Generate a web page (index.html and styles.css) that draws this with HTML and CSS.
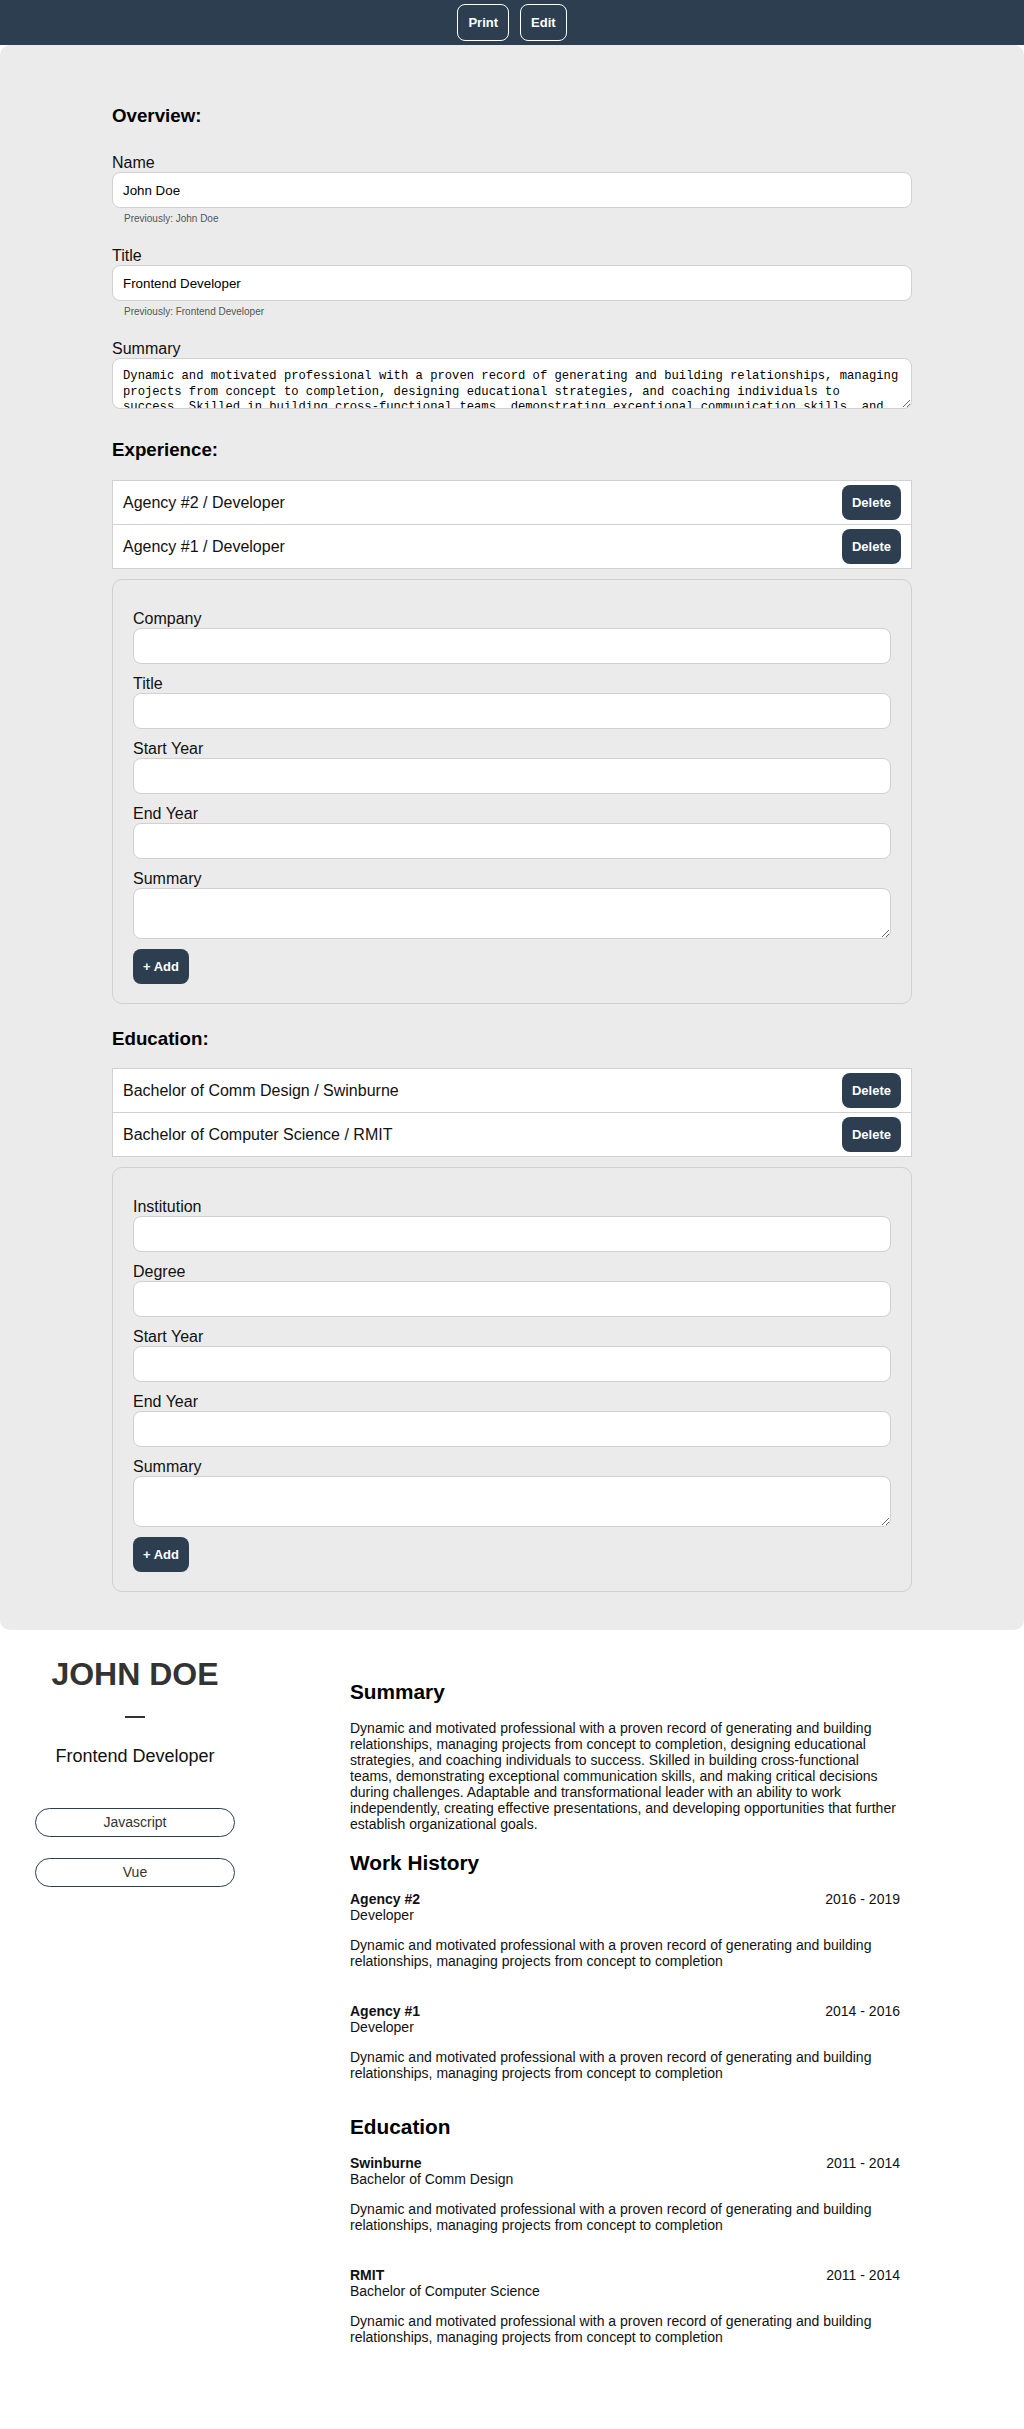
FILE: index.html
```html
<!DOCTYPE html>
<html lang="en">
<head>
<meta charset="utf-8">
<title>Resume Builder</title>
<link rel="stylesheet" href="styles.css">
</head>
<body>
<header class="topbar">
  <button class="btn-outline" type="button">Print</button>
  <button class="btn-outline" type="button">Edit</button>
</header>

<main class="editor">
  <div class="editor-inner">
    <section class="overview">
      <h3 class="section-title">Overview:</h3>
      <div class="field field-ov">
        <label class="field-label">Name</label>
        <input class="text-input" type="text" value="John Doe">
        <div class="previous">Previously: John Doe</div>
      </div>
      <div class="field field-ov">
        <label class="field-label">Title</label>
        <input class="text-input" type="text" value="Frontend Developer">
        <div class="previous">Previously: Frontend Developer</div>
      </div>
      <div class="field field-last">
        <label class="field-label">Summary</label>
        <textarea class="text-area">Dynamic and motivated professional with a proven record of generating and building relationships, managing projects from concept to completion, designing educational strategies, and coaching individuals to success. Skilled in building cross-functional teams, demonstrating exceptional communication skills, and making critical decisions during challenges. Adaptable and transformational leader with an ability to work independently, creating effective presentations, and developing opportunities that further establish organizational goals.</textarea>
      </div>
    </section>

    <section class="experience">
      <h3 class="section-title section-title-exp">Experience:</h3>
      <ul class="entry-list">
        <li class="entry"><span>Agency #2 / Developer</span><button class="btn-dark" type="button">Delete</button></li>
        <li class="entry"><span>Agency #1 / Developer</span><button class="btn-dark" type="button">Delete</button></li>
      </ul>
      <div class="form-box">
        <div class="field"><label class="field-label">Company</label><input class="text-input" type="text"></div>
        <div class="field"><label class="field-label">Title</label><input class="text-input" type="text"></div>
        <div class="field"><label class="field-label">Start Year</label><input class="text-input" type="text"></div>
        <div class="field"><label class="field-label">End Year</label><input class="text-input" type="text"></div>
        <div class="field"><label class="field-label">Summary</label><textarea class="text-area"></textarea></div>
        <button class="btn-dark btn-add" type="button">+ Add</button>
      </div>
    </section>

    <section class="education">
      <h3 class="section-title section-title-edu">Education:</h3>
      <ul class="entry-list">
        <li class="entry"><span>Bachelor of Comm Design / Swinburne</span><button class="btn-dark" type="button">Delete</button></li>
        <li class="entry"><span>Bachelor of Computer Science / RMIT</span><button class="btn-dark" type="button">Delete</button></li>
      </ul>
      <div class="form-box">
        <div class="field"><label class="field-label">Institution</label><input class="text-input" type="text"></div>
        <div class="field"><label class="field-label">Degree</label><input class="text-input" type="text"></div>
        <div class="field"><label class="field-label">Start Year</label><input class="text-input" type="text"></div>
        <div class="field"><label class="field-label">End Year</label><input class="text-input" type="text"></div>
        <div class="field"><label class="field-label">Summary</label><textarea class="text-area"></textarea></div>
        <button class="btn-dark btn-add" type="button">+ Add</button>
      </div>
    </section>
  </div>
</main>

<div class="resume">
  <aside class="resume-side">
    <h1 class="resume-name">JOHN DOE</h1>
    <div class="dash"></div>
    <p class="resume-title">Frontend Developer</p>
    <ul class="skills">
      <li class="skill">Javascript</li>
      <li class="skill">Vue</li>
    </ul>
  </aside>
  <div class="resume-main">
    <h2 class="resume-heading resume-heading-first">Summary</h2>
    <p class="resume-text">Dynamic and motivated professional with a proven record of generating and building relationships, managing projects from concept to completion, designing educational strategies, and coaching individuals to success. Skilled in building cross-functional teams, demonstrating exceptional communication skills, and making critical decisions during challenges. Adaptable and transformational leader with an ability to work independently, creating effective presentations, and developing opportunities that further establish organizational goals.</p>

    <h2 class="resume-heading">Work History</h2>
    <div class="job">
      <div class="job-head"><span class="job-name">Agency #2</span><span>2016 - 2019</span></div>
      <div class="job-role">Developer</div>
      <p class="job-desc">Dynamic and motivated professional with a proven record of generating and building relationships, managing projects from concept to completion</p>
    </div>
    <div class="job">
      <div class="job-head"><span class="job-name">Agency #1</span><span>2014 - 2016</span></div>
      <div class="job-role">Developer</div>
      <p class="job-desc">Dynamic and motivated professional with a proven record of generating and building relationships, managing projects from concept to completion</p>
    </div>

    <h2 class="resume-heading">Education</h2>
    <div class="job">
      <div class="job-head"><span class="job-name">Swinburne</span><span>2011 - 2014</span></div>
      <div class="job-role">Bachelor of Comm Design</div>
      <p class="job-desc">Dynamic and motivated professional with a proven record of generating and building relationships, managing projects from concept to completion</p>
    </div>
    <div class="job">
      <div class="job-head"><span class="job-name">RMIT</span><span>2011 - 2014</span></div>
      <div class="job-role">Bachelor of Computer Science</div>
      <p class="job-desc">Dynamic and motivated professional with a proven record of generating and building relationships, managing projects from concept to completion</p>
    </div>
  </div>
</div>
</body>
</html>
```

FILE: styles.css
```css
* { box-sizing: border-box; }

html, body {
  margin: 0;
  padding: 0;
  background: #ffffff;
}

body {
  font-family: "Liberation Sans", Arial, sans-serif;
  color: #111;
}

/* top bar */
.topbar {
  background: #2c3e50;
  height: 45px;
  display: flex;
  justify-content: center;
  align-items: center;
  gap: 11px;
}

.btn-outline {
  font: bold 13px/15px "Liberation Sans", Arial, sans-serif;
  color: #fff;
  background: transparent;
  border: 1px solid #fff;
  border-radius: 8px;
  padding: 10px;
  margin: 0;
}

.btn-dark {
  font: bold 13px/15px "Liberation Sans", Arial, sans-serif;
  color: #fff;
  background: #2c3e50;
  border: 0;
  border-radius: 8px;
  padding: 10px;
  margin: 0;
}

/* editor panel */
.editor {
  display: block;
  background: #ebebeb;
  border-radius: 10px;
  padding: 60px 0 38px;
}

.editor-inner {
  width: 800px;
  margin: 0 auto;
}

.section-title {
  font: bold 18.72px/22px "Liberation Sans", Arial, sans-serif;
  color: #000;
  margin: 0 0 26px;
}

.section-title-exp {
  margin: 30px 0 19px;
}

.section-title-edu {
  margin: 24px 0 18px;
}

.field {
  margin-bottom: 10px;
}

.field-ov {
  margin-bottom: 21px;
}

.field-last {
  margin-bottom: 0;
}

.field-label {
  display: block;
  font-size: 16px;
  line-height: 19px;
  color: #111;
}

.text-input {
  display: block;
  width: 100%;
  height: 36px;
  margin: 0;
  padding: 0 10px;
  border: 1px solid #d0d0d0;
  border-radius: 8px;
  background: #fff;
  font: 13.33px "Liberation Sans", Arial, sans-serif;
  color: #000;
}

.previous {
  font-size: 10px;
  line-height: 12px;
  color: #555;
  margin: 5px 0 0 12px;
}

.text-area {
  display: block;
  width: 100%;
  height: 51px;
  margin: 0;
  padding: 10px;
  border: 1px solid #d0d0d0;
  border-radius: 8px;
  background: #fff;
  font: 12.2px/15.6px "Liberation Mono", "DejaVu Sans Mono", monospace;
  color: #000;
  overflow: hidden;
}

/* lists */
.entry-list {
  list-style: none;
  margin: 0;
  padding: 0;
  background: #fff;
  border: 1px solid #d0d0d0;
}

.entry {
  display: flex;
  justify-content: space-between;
  align-items: center;
  padding: 4px 10px;
  font-size: 16px;
  line-height: 19px;
  color: #111;
}

.entry + .entry {
  border-top: 1px solid #d0d0d0;
}

.form-box {
  margin-top: 10px;
  border: 1px solid #d0d0d0;
  border-radius: 10px;
  padding: 29px 20px 19px;
}

.btn-add {
  display: block;
  margin-top: 2px;
}

/* resume */
.resume {
  display: flex;
  align-items: flex-start;
}

.resume-side {
  width: 270px;
  text-align: center;
  padding-top: 26px;
}

.resume-name {
  font: bold 32px/37px "Liberation Sans", Arial, sans-serif;
  color: #333;
  margin: 0;
}

.dash {
  width: 20px;
  height: 2px;
  background: #333;
  margin: 23px auto 0;
}

.resume-title {
  font-size: 18px;
  line-height: 21px;
  margin: 28px 0 0;
  color: #111;
}

.skills {
  list-style: none;
  margin: 41px 0 0;
  padding: 0;
}

.skill {
  width: 200px;
  margin: 0 auto;
  border: 1px solid #2c3e50;
  border-radius: 15px;
  padding: 6px 0;
  font-size: 14px;
  line-height: 15px;
  color: #333;
}

.skill + .skill {
  margin-top: 21px;
}

.resume-main {
  width: 550px;
  margin-left: 80px;
  padding-top: 50px;
}

.resume-heading {
  font: bold 20.8px/24px "Liberation Sans", Arial, sans-serif;
  color: #000;
  margin: 19px 0 16px;
}

.resume-heading-first {
  margin-top: 0;
}

.resume-text {
  font-size: 14px;
  line-height: 16px;
  margin: 0;
  color: #111;
}

.job {
  margin-bottom: 34px;
  font-size: 14px;
  line-height: 16px;
}

.job-head {
  display: flex;
  justify-content: space-between;
}

.job-name {
  font-weight: bold;
}

.job-desc {
  margin: 14px 0 0;
}
```
